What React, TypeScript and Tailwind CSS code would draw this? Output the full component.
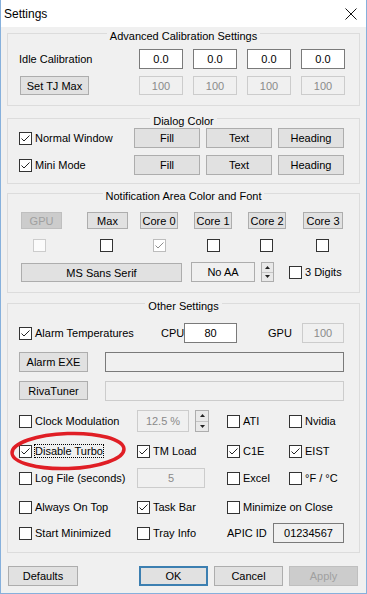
import React from "react";

// win10 style classes
const btn = "flex items-center justify-center border border-[#adadad] bg-[#e1e1e1]";
const btnOff = "flex items-center justify-center border border-[#bfbfbf] bg-[#cccccc] text-[#a0a0a0]";
const edit = "flex items-center justify-center border border-[#7a7a7a] bg-white";
const editOff = "flex items-center justify-center border border-[#cccccc] bg-[#f0f0f0] text-[#8a8a8a]";
const editRo = "flex items-center justify-center border border-[#7a7a7a] bg-[#f0f0f0]";

const Check = ({ on = false, dim = false, ghost = false }: { on?: boolean; dim?: boolean; ghost?: boolean }) => (
  <span
    className={`flex h-[13px] w-[13px] shrink-0 items-center justify-center border ${
      ghost ? "border-[#cccccc] bg-[#fbfbfb]" : dim ? "border-[#bcbcbc] bg-white" : "border-[#333333] bg-white"
    }`}
  >
    {on && (
      <svg width="11" height="11" viewBox="0 0 11 11">
        <path d="M1.5 5.5 L4 8 L9.5 2.5" fill="none" stroke={dim ? "#8c8c8c" : "#222"} strokeWidth="1" />
      </svg>
    )}
  </span>
);

const Opt = ({ on = false, children }: { on?: boolean; children: React.ReactNode }) => (
  <div className="flex items-center gap-[3px]">
    <Check on={on} />
    <span>{children}</span>
  </div>
);

const Spin = ({ cls }: { cls: string }) => (
  <div className={`flex flex-col border border-[#adadad] bg-[#e9e9e9] ${cls}`}>
    <div className="flex flex-1 items-center justify-center border-b border-[#c4c4c4]">
      <svg width="5" height="3" viewBox="0 0 5 3">
        <polygon points="2.5,0 5,3 0,3" fill="#222" />
      </svg>
    </div>
    <div className="flex flex-1 items-center justify-center">
      <svg width="5" height="3" viewBox="0 0 5 3">
        <polygon points="0,0 5,0 2.5,3" fill="#222" />
      </svg>
    </div>
  </div>
);

const Group = ({ title, className, children }: { title: string; className: string; children: React.ReactNode }) => (
  <div className={`border border-[#dcdcdc] ${className}`}>
    <div className="-mt-[5px] flex justify-center">
      <span className="bg-[#f0f0f0] px-[3px] leading-[14px]">{title}</span>
    </div>
    {children}
  </div>
);

const App = () => {
  return (
    <div className="relative h-[594px] w-[367px] overflow-hidden border-x border-b border-[#86b0dc] bg-[#f0f0f0] font-['Liberation_Sans',Arial,sans-serif] text-[11px] leading-[14px] text-black">
      {/* title bar */}
      <div className="flex h-[27px] items-center justify-between bg-white pl-[3px] pr-[9px]">
        <span className="text-[12px]">Settings</span>
        <svg width="12" height="12" viewBox="0 0 12 12">
          <path d="M0.5 0.5 L11.5 11.5 M11.5 0.5 L0.5 11.5" stroke="#111" strokeWidth="1" />
        </svg>
      </div>

      <div className="px-[6px]">
        <Group title="Advanced Calibration Settings" className="mt-[6px] pb-[10px]">
          <div className="mt-[6px] flex h-[20px] items-center">
            <span className="ml-[11px] w-[120px]">Idle Calibration</span>
            <div className="flex h-[20px] gap-[10px]">
              {[0, 1, 2, 3].map((i) => (
                <div key={i} className={`${edit} w-[44px]`}>0.0</div>
              ))}
            </div>
          </div>
          <div className="mt-[7px] flex h-[19px]">
            <div className={`${btn} ml-[12px] w-[69px]`}>Set TJ Max</div>
            <div className="ml-[50px] flex gap-[10px]">
              {[0, 1, 2, 3].map((i) => (
                <div key={i} className={`${editOff} w-[44px]`}>100</div>
              ))}
            </div>
          </div>
        </Group>

        <Group title="Dialog Color" className="mt-[12px] pb-[8px]">
          <div className="flex h-[20px] items-center">
            <div className="ml-[11px] w-[115px]">
              <Opt on>Normal Window</Opt>
            </div>
            <div className="flex h-[20px] gap-[6px]">
              <div className={`${btn} w-[66px]`}>Fill</div>
              <div className={`${btn} w-[66px]`}>Text</div>
              <div className={`${btn} w-[66px]`}>Heading</div>
            </div>
          </div>
          <div className="mt-[7px] flex h-[20px] items-center">
            <div className="ml-[11px] w-[115px]">
              <Opt on>Mini Mode</Opt>
            </div>
            <div className="flex h-[20px] gap-[6px]">
              <div className={`${btn} w-[66px]`}>Fill</div>
              <div className={`${btn} w-[66px]`}>Text</div>
              <div className={`${btn} w-[66px]`}>Heading</div>
            </div>
          </div>
        </Group>

        <Group title="Notification Area Color and Font" className="mt-[9px] pb-[10px]">
          <div className="mt-[9px] flex h-[17px]">
            <div className={`${btnOff} ml-[13px] w-[41px]`}>GPU</div>
            <div className={`${btn} ml-[25px] w-[41px]`}>Max</div>
            <div className={`${btn} ml-[12px] w-[38px]`}>Core 0</div>
            <div className={`${btn} ml-[16px] w-[38px]`}>Core 1</div>
            <div className={`${btn} ml-[16px] w-[38px]`}>Core 2</div>
            <div className={`${btn} ml-[17px] w-[40px]`}>Core 3</div>
          </div>
          <div className="mt-[10px] flex h-[13px]">
            <span className="ml-[25px]"><Check ghost /></span>
            <span className="ml-[54px]"><Check /></span>
            <span className="ml-[40px]"><Check on dim /></span>
            <span className="ml-[41px]"><Check /></span>
            <span className="ml-[40px]"><Check /></span>
            <span className="ml-[43px]"><Check /></span>
          </div>
          <div className="mt-[10px] flex h-[20px] items-center">
            <div className={`${btn} ml-[13px] h-[19px] w-[161px] self-end`}>MS Sans Serif</div>
            <div className={`${editRo} ml-[9px] h-[20px] w-[64px] border-[#adadad]`}>No AA</div>
            <Spin cls="ml-[6px] h-[20px] w-[13px]" />
            <div className="ml-[15px]">
              <Opt>3 Digits</Opt>
            </div>
          </div>
        </Group>

        <Group title="Other Settings" className="mt-[10px] pb-[9px]">
          <div className="mt-[10px] flex h-[20px] items-center">
            <div className="w-[153px] pl-[11px]">
              <Opt on>Alarm Temperatures</Opt>
            </div>
            <span className="w-[23px] whitespace-nowrap">CPU</span>
            <div className={`${edit} h-[20px] w-[53px]`}>80</div>
            <span className="ml-[31px] w-[34px]">GPU</span>
            <div className={`${editOff} h-[20px] w-[42px]`}>100</div>
          </div>
          <div className="mt-[9px] flex h-[20px]">
            <div className={`${btn} ml-[11px] w-[69px]`}>Alarm EXE</div>
            <div className={`${editRo} ml-[17px] w-[239px]`} />
          </div>
          <div className="mt-[9px] flex h-[20px]">
            <div className={`${btn} ml-[11px] h-[19px] w-[69px]`}>RivaTuner</div>
            <div className={`${editOff} ml-[17px] w-[239px]`} />
          </div>
          <div className="mt-[9px] flex h-[22px] items-center">
            <div className="w-[129px] pl-[11px]">
              <Opt>Clock Modulation</Opt>
            </div>
            <div className={`${editOff} h-[22px] w-[52px]`}>12.5 %</div>
            <Spin cls="ml-[6px] h-[22px] w-[14px]" />
            <div className="ml-[18px] w-[62px]">
              <Opt>ATI</Opt>
            </div>
            <Opt>Nvidia</Opt>
          </div>
          <div className="mt-[9px] flex h-[20px] items-center">
            <div className="w-[129px] pl-[11px]">
              <div className="flex items-center gap-[2px]">
                <Check on />
                <span className="border border-dotted border-black leading-[12px]">Disable Turbo</span>
              </div>
            </div>
            <div className="w-[90px]">
              <Opt on>TM Load</Opt>
            </div>
            <div className="w-[62px]">
              <Opt on>C1E</Opt>
            </div>
            <Opt on>EIST</Opt>
          </div>
          <div className="mt-[7px] flex h-[20px] items-center">
            <div className="w-[129px] pl-[11px]">
              <Opt>Log File (seconds)</Opt>
            </div>
            <div className="w-[90px]">
              <div className={`${editOff} h-[20px] w-[68px]`}>5</div>
            </div>
            <div className="w-[62px]">
              <Opt>Excel</Opt>
            </div>
            <Opt>°F / °C</Opt>
          </div>
          <div className="mt-[9px] flex h-[20px] items-center">
            <div className="w-[129px] pl-[11px]">
              <Opt>Always On Top</Opt>
            </div>
            <div className="w-[90px]">
              <Opt on>Task Bar</Opt>
            </div>
            <Opt>Minimize on Close</Opt>
          </div>
          <div className="mt-[6px] flex h-[20px] items-center">
            <div className="w-[129px] pl-[11px]">
              <Opt>Start Minimized</Opt>
            </div>
            <div className="w-[90px]">
              <Opt>Tray Info</Opt>
            </div>
            <span className="w-[46px]">APIC ID</span>
            <div className={`${editRo} h-[20px] w-[71px]`}>01234567</div>
          </div>
        </Group>
      </div>

      {/* bottom buttons */}
      <div className="mt-[13px] flex h-[20px]">
        <div className={`${btn} ml-[7px] w-[70px]`}>Defaults</div>
        <div className="ml-[61px] flex w-[69px] items-center justify-center border-2 border-[#3c7fb1] bg-[#e1e1e1]">OK</div>
        <div className={`${btn} ml-[6px] w-[69px]`}>Cancel</div>
        <div className={`${btnOff} ml-[6px] w-[69px]`}>Apply</div>
      </div>

      {/* red marker ellipse drawn over the screenshot */}
      <svg className="pointer-events-none absolute left-[7px] top-[430px]" width="122" height="42" viewBox="0 0 122 42">
        <ellipse cx="60" cy="21" rx="56" ry="17.5" fill="none" stroke="#e01e25" strokeWidth="3.5" transform="rotate(-2 60 21)" />
      </svg>
    </div>
  );
};

export default App;
